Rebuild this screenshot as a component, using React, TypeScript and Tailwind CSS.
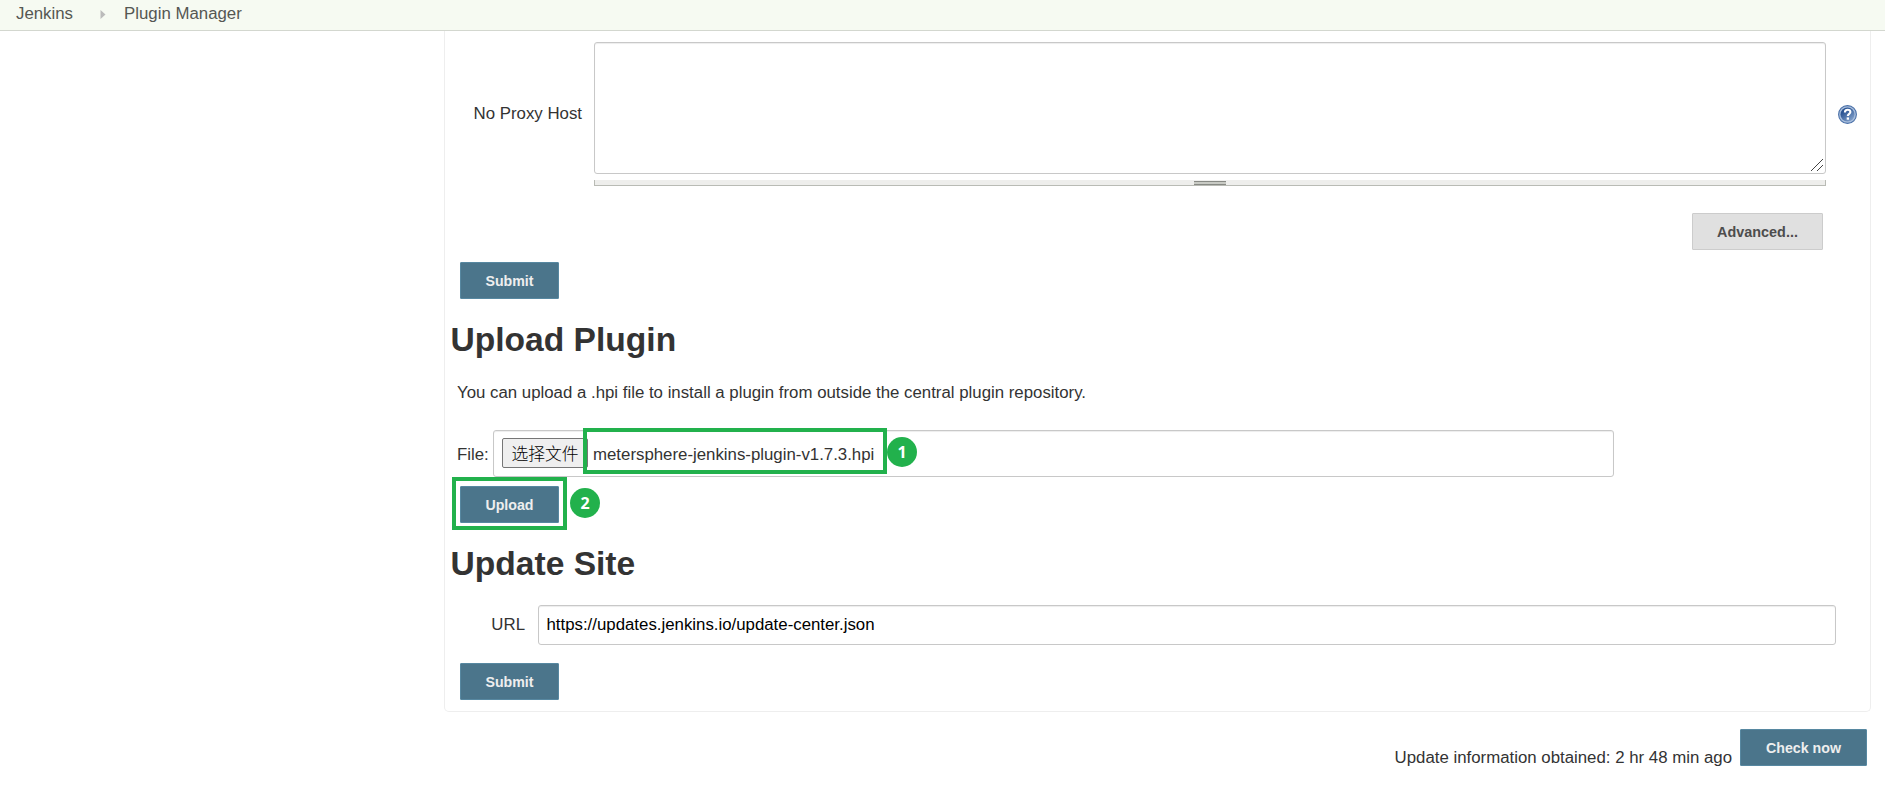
import React from "react";

function PrimaryButton({ label, className = "" }: { label: string; className?: string }) {
  return (
    <button
      className={`h-[37px] shrink-0 rounded-[1px] border border-[#5788a1] bg-[#4b758b] pt-[2px] text-[14.2px] leading-[33px] font-bold text-[#eeeeee] ${className}`}
    >
      {label}
    </button>
  );
}

function HelpIcon() {
  return (
    <svg className="h-[19px] w-[19px] shrink-0" viewBox="0 0 19 19">
      <defs>
        <linearGradient id="help-fill" x1="0" y1="0" x2="0.8" y2="1">
          <stop offset="0.3" stopColor="#2c5594" />
          <stop offset="1" stopColor="#86a4cd" />
        </linearGradient>
      </defs>
      <circle cx="9.5" cy="9.5" r="8.9" fill="#a9bfdd" stroke="#4a70a8" strokeWidth="1.1" />
      <circle cx="9.5" cy="9.5" r="7" fill="url(#help-fill)" />
      <path d="M6.9 7.4C6.9 5.5 8 4.8 9.6 4.8s2.8.8 2.8 2.3c0 1.8-2.6 1.8-2.6 4" fill="none" stroke="#fff" strokeWidth="2.1" />
      <rect x="8.7" y="12.4" width="2.3" height="2.3" fill="#fff" />
    </svg>
  );
}

function Step({ n, className }: { n: number; className: string }) {
  return (
    <span
      className={`absolute flex h-[30px] w-[30px] items-center justify-center rounded-full bg-[#22b14c] pb-px font-['Open_Sans',sans-serif] text-[16px] leading-none font-bold text-white ${className}`}
    >
      {n}
    </span>
  );
}

const field = "rounded-[3px] border border-[#c8c8c8] bg-white shadow-[inset_0_1px_1px_rgba(0,0,0,0.075)]";
const heading = "ml-[5.5px] text-[33.6px] leading-[40px] font-bold text-[#333333]";

export default function App() {
  return (
    <div className="h-[810px] w-full overflow-hidden bg-white font-['Liberation_Sans',Arial,sans-serif] text-[16.82px] leading-[20px] text-[#333333]">
      <header className="flex h-[31px] items-center border-b border-[#d3d7cf] bg-[#f6faf2] pb-[2px] pl-4 text-[#555753]">
        <span>Jenkins</span>
        <svg className="mr-[18px] ml-[27px] h-[9px] w-[6px]" viewBox="0 0 6 9">
          <path d="M0.5 0L5.5 4.5L0.5 9Z" fill="#bbbbbb" />
        </svg>
        <span>Plugin Manager</span>
      </header>

      <main className="ml-[444px] flex h-[681px] w-[1427px] flex-col rounded-b-[5px] border border-t-0 border-[#eeeeee]">
        <div className="mt-[11px] flex h-[144px]">
          <div className="w-[149px] pt-[62px] pr-[12px] text-right leading-[20px] whitespace-nowrap">No Proxy Host</div>
          <div className="flex w-[1232px] flex-col gap-[6px]">
            <div className={`flex h-[132px] items-end justify-end p-[2px] ${field}`}>
              <svg className="h-[12px] w-[12px]" viewBox="0 0 12 12">
                <path d="M0 12L12 0M6 12L12 6" stroke="#444444" fill="none" />
              </svg>
            </div>
            <div className="flex h-[6px] justify-center border border-t-0 border-[#b9bbb5] bg-[#eeeeec] pt-[1px]">
              <div className="h-[4px] w-[32px] border-y border-[#888a85] bg-[#c8cac4]" />
            </div>
          </div>
          <div className="ml-[12px] pt-[63px]">
            <HelpIcon />
          </div>
        </div>

        <div className="mt-[27px] flex justify-end pr-[47px]">
          <button className="h-[37px] w-[131px] rounded-[1px] border border-[#cccccc] bg-[#e0e0e0] pt-[2px] text-[14.4px] leading-[33px] font-bold text-[#4d4d4d]">
            Advanced...
          </button>
        </div>

        <div className="mt-[12px] flex pl-[15px]">
          <PrimaryButton label="Submit" className="w-[99px]" />
        </div>

        <h1 className={`mt-[21px] ${heading}`}>Upload Plugin</h1>
        <p className="mt-[23px] ml-[12px] leading-[20px]">
          You can upload a .hpi file to install a plugin from outside the central plugin repository.
        </p>

        <div className="mt-[27px] flex h-[47px] items-center">
          <span className="ml-[12px] w-[36px] pt-[2px]">File:</span>
          <div className={`relative flex h-[47px] w-[1121px] items-start pt-[7px] pl-[8px] ${field}`}>
            <button className="h-[30px] w-[86px] rounded-[2px] border border-[#767676] bg-[#efefef] pt-[3px] font-['Liberation_Sans','Noto_Sans_CJK_SC',sans-serif] text-[16.8px] leading-[25px] font-light text-black">
              选择文件
            </button>
            <span className="mt-[7px] ml-[5px]">metersphere-jenkins-plugin-v1.7.3.hpi</span>
            <div className="absolute -top-[3px] left-[89px] h-[46px] w-[304px] border-4 border-[#22b14c]" />
            <Step n={1} className="top-[6px] left-[393px]" />
          </div>
        </div>

        <div className="mt-[9px] flex pl-[15px]">
          <div className="relative">
            <PrimaryButton label="Upload" className="w-[99px]" />
            <div className="absolute -top-[9px] -left-[8px] h-[53px] w-[115px] border-4 border-[#22b14c]" />
            <Step n={2} className="top-[2px] left-[110px]" />
          </div>
        </div>

        <h1 className={`mt-[21px] ${heading}`}>Update Site</h1>

        <div className="mt-[21px] flex h-[40px] items-center">
          <span className="w-[93px] pr-[13px] text-right">URL</span>
          <div className={`flex h-[40px] w-[1298px] items-center pl-[7.5px] text-black ${field}`}>
            https://updates.jenkins.io/update-center.json
          </div>
        </div>

        <div className="mt-[18px] flex pl-[15px]">
          <PrimaryButton label="Submit" className="w-[99px]" />
        </div>
      </main>

      <footer className="mt-[17px] flex justify-end pr-[18px]">
        <span className="mt-[19px] mr-[8px]">Update information obtained: 2 hr 48 min ago</span>
        <PrimaryButton label="Check now" className="w-[127px]" />
      </footer>
    </div>
  );
}
